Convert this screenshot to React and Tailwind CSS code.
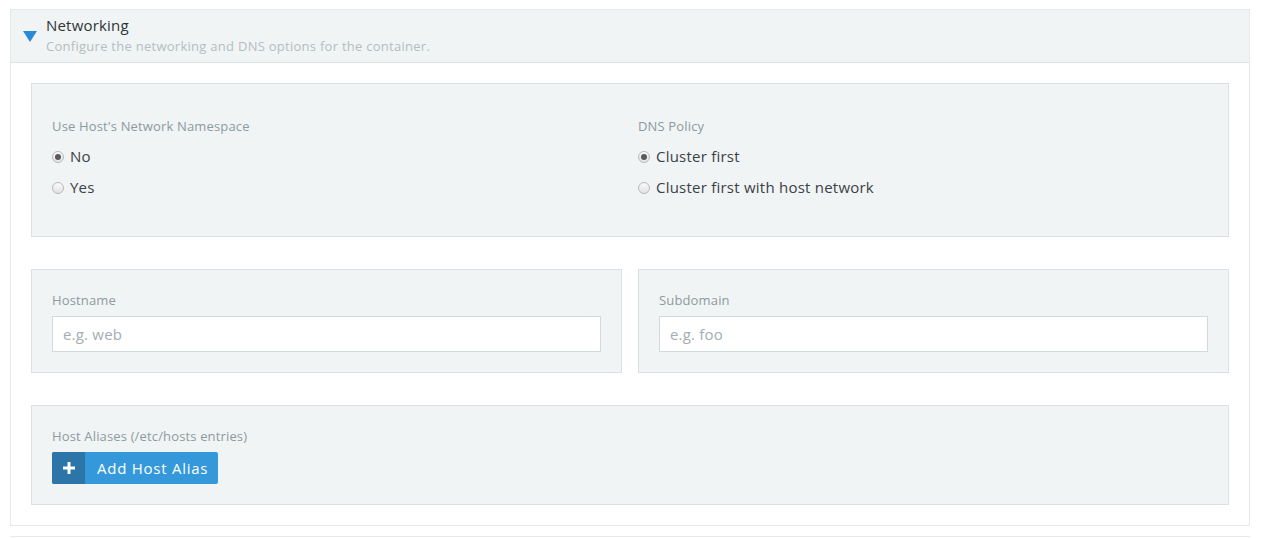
import React, { useState } from 'react';

const Radio = ({ checked, label, onClick }) => (
    <label className="flex items-center gap-[6px] h-[31px] cursor-pointer" onClick={onClick}>
        <span className="w-[12px] h-[12px] rounded-full border border-[#b4babe] bg-gradient-to-b from-[#fafafa] to-[#e2e2e2] flex items-center justify-center">
            {checked && <span className="w-[6px] h-[6px] rounded-full bg-[#5a5a5a]" />}
        </span>
        <span className="text-[15px] tracking-[0.23px] text-[#3b4145]">{label}</span>
    </label>
);

const App = () => {
    const [hostNet, setHostNet] = useState('no');
    const [dns, setDns] = useState('cluster');

    return (
        <div className="bg-white min-h-[538px] pt-[9px] px-[10px] pr-[13px]" style={{ fontFamily: '"Open Sans", Lato, sans-serif' }}>
            <div className="border border-[#e5e9ea]">
                <div className="h-[53px] bg-[#f0f4f5] border-b border-[#dde3e5] flex items-start pl-[12px] pt-[5px]">
                    <svg width="14" height="11" viewBox="0 0 14 11" className="mt-[16px] mr-[9px]">
                        <path d="M0 0 L14 0 L7 11 Z" fill="#2a8ad4" />
                    </svg>
                    <div>
                        <div className="text-[15px] leading-[20px] tracking-[0.2px] text-[#2f3437]">Networking</div>
                        <div className="text-[13px] leading-[22px] tracking-[0.27px] text-[#b6bdc1]">Configure the networking and DNS options for the container.</div>
                    </div>
                </div>

                <div className="px-[20px] py-[20px] flex flex-col gap-[32px]">
                    <div className="h-[154px] bg-[#f0f4f5] border border-[#d9e1e4] px-[20px] pt-[33px] grid grid-cols-2 gap-[16px]">
                        <div>
                            <div className="text-[13px] leading-[18px] tracking-[0.15px] text-[#8e9a9f] mb-[6px]">Use Host's Network Namespace</div>
                            <Radio checked={hostNet === 'no'} label="No" onClick={() => setHostNet('no')} />
                            <Radio checked={hostNet === 'yes'} label="Yes" onClick={() => setHostNet('yes')} />
                        </div>
                        <div>
                            <div className="text-[13px] leading-[18px] tracking-[0.15px] text-[#8e9a9f] mb-[6px]">DNS Policy</div>
                            <Radio checked={dns === 'cluster'} label="Cluster first" onClick={() => setDns('cluster')} />
                            <Radio checked={dns === 'host'} label="Cluster first with host network" onClick={() => setDns('host')} />
                        </div>
                    </div>

                    <div className="grid grid-cols-2 gap-[16px]">
                        <div className="bg-[#f0f4f5] border border-[#d9e1e4] px-[20px] pt-[21px] pb-[20px]">
                            <div className="text-[13px] leading-[18px] tracking-[0.15px] text-[#8e9a9f] mb-[7px]">Hostname</div>
                            <input
                                type="text"
                                placeholder="e.g. web"
                                className="block w-full h-[36px] bg-white border border-[#d3dadd] px-[10px] text-[15px] tracking-[0.2px] text-[#3b4145] placeholder:text-[#a4adb2] outline-none"
                            />
                        </div>
                        <div className="bg-[#f0f4f5] border border-[#d9e1e4] px-[20px] pt-[21px] pb-[20px]">
                            <div className="text-[13px] leading-[18px] tracking-[0.15px] text-[#8e9a9f] mb-[7px]">Subdomain</div>
                            <input
                                type="text"
                                placeholder="e.g. foo"
                                className="block w-full h-[36px] bg-white border border-[#d3dadd] px-[10px] text-[15px] tracking-[0.2px] text-[#3b4145] placeholder:text-[#a4adb2] outline-none"
                            />
                        </div>
                    </div>

                    <div className="bg-[#f0f4f5] border border-[#d9e1e4] px-[20px] pt-[21px] pb-[20px]">
                        <div className="text-[13px] leading-[18px] tracking-[0.15px] text-[#8e9a9f] mb-[7px]">Host Aliases (/etc/hosts entries)</div>
                        <button className="flex h-[32px] rounded-[2px] overflow-hidden bg-[#3498db] text-white">
                            <span className="w-[33px] h-full bg-[#2d74a9] flex items-center justify-center">
                                <svg width="12" height="12" viewBox="0 0 12 12">
                                    <path d="M4.5 0h3v4.5H12v3H7.5V12h-3V7.5H0v-3h4.5z" fill="#fff" />
                                </svg>
                            </span>
                            <span className="pl-[12px] pr-[10px] text-[15px] leading-[32px] tracking-[0.75px]">Add Host Alias</span>
                        </button>
                    </div>
                </div>
            </div>
            <div className="mt-[10px] border-t border-[#e5e9ea] h-[4px]" />
        </div>
    );
};

export default App;
